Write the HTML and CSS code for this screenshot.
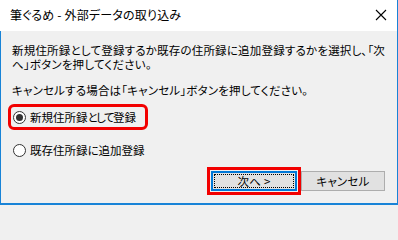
FILE: index.html
```html
<!DOCTYPE html>
<html lang="ja">
<head>
<meta charset="utf-8">
<title>筆ぐるめ - 外部データの取り込み</title>
<link rel="stylesheet" href="styles.css">
</head>
<body>
<div class="window">
  <div class="titlebar">
    <span class="title">筆ぐるめ - 外部データの取り込み</span>
    <svg class="close" width="12" height="12" viewBox="0 0 12 12"><path d="M1 1 L11 11 M11 1 L1 11" stroke="#000" stroke-width="1.1" fill="none"/></svg>
  </div>
  <div class="content">
    <p class="msg">新規住所録として登録するか既存の住所録に追加登録するかを選択し、「次<br>へ」ボタンを押してください。</p>
    <p class="msg second">キャンセルする場合は「キャンセル」ボタンを押してください。</p>
    <div class="options">
      <label class="radio highlight"><span class="dot checked"></span><span class="label">新規住所録<span class="kana">として</span>登録</span></label>
      <label class="radio"><span class="dot"></span><span class="label">既存住所録に追加登録</span></label>
    </div>
    <div class="buttons">
      <button class="btn default highlight-btn"><span class="focus">次へ &gt;</span></button>
      <button class="btn cancel">キャンセル</button>
    </div>
  </div>
</div>
</body>
</html>
```
FILE: styles.css
```css
html, body {
  margin: 0;
  padding: 0;
  background: #f0f0f0;
}
body {
  font-family: "Noto Sans CJK JP", "Noto Sans", sans-serif;
  font-size: 11.5px;
  letter-spacing: 0.2px;
  color: #000;
  font-feature-settings: "palt";
}
.window {
  width: 398px;
  height: 205px;
  box-sizing: border-box;
  display: flex;
  flex-direction: column;
  border-right: 1px solid #1883d7;
  overflow: hidden;
}
.titlebar {
  height: 31px;
  flex: none;
  background: #fff;
  display: flex;
  align-items: center;
  justify-content: space-between;
  padding: 0 10px 0 10px;
}
.title {
  font-size: 12px;
  line-height: 14px;
  margin-top: -1px;
}
.close {
  display: block;
  margin-top: -2px;
}
.content {
  height: 174px;
  flex: none;
  box-sizing: border-box;
  background: #f0f0f0;
  border-left: 1px solid #1883d7;
  border-bottom: 2px solid #1883d7;
  padding: 12px 12px 0 11px;
  display: flex;
  flex-direction: column;
}
.msg {
  margin: 0;
  line-height: 14px;
  white-space: nowrap;
}
.msg.second {
  margin-top: 12px;
}
.options {
  display: flex;
  flex-direction: column;
  align-items: flex-start;
  gap: 15px;
  margin-top: 11px;
}
.radio {
  display: inline-flex;
  align-items: center;
  height: 18px;
  padding: 0 8px 0 1px;
  gap: 4px;
  border-radius: 2px;
}
.radio.highlight {
  outline: 3px solid #f20000;
  outline-offset: 1px;
}
.dot {
  width: 13px;
  height: 13px;
  box-sizing: border-box;
  border: 1px solid #333;
  border-radius: 50%;
  background: #fff;
  display: flex;
  align-items: center;
  justify-content: center;
}
.dot.checked::after {
  content: "";
  width: 7px;
  height: 7px;
  border-radius: 50%;
  background: #333;
}
.label {
  line-height: 14px;
  letter-spacing: 0;
}
.kana {
  letter-spacing: -1.5px;
}
.buttons {
  display: flex;
  justify-content: flex-end;
  gap: 4px;
  margin-top: 12px;
}
.btn {
  font: inherit;
  letter-spacing: inherit;
  font-feature-settings: "palt";
  height: 20px;
  background: #e1e1e1;
  color: #000;
  padding: 0;
  box-sizing: border-box;
  display: flex;
  align-items: center;
  justify-content: center;
}
.btn.default {
  width: 86px;
  border: 2px solid #0078d7;
  padding: 1px;
}
.focus {
  flex: 1;
  height: 100%;
  box-sizing: border-box;
  border: 1px dotted #000;
  display: flex;
  align-items: center;
  justify-content: center;
  line-height: 12px;
}
.highlight-btn {
  outline: 3px solid #f20000;
  outline-offset: 1px;
  border-radius: 0;
}
.btn.cancel {
  width: 84px;
  border: 1px solid #adadad;
  line-height: 12px;
}
```
